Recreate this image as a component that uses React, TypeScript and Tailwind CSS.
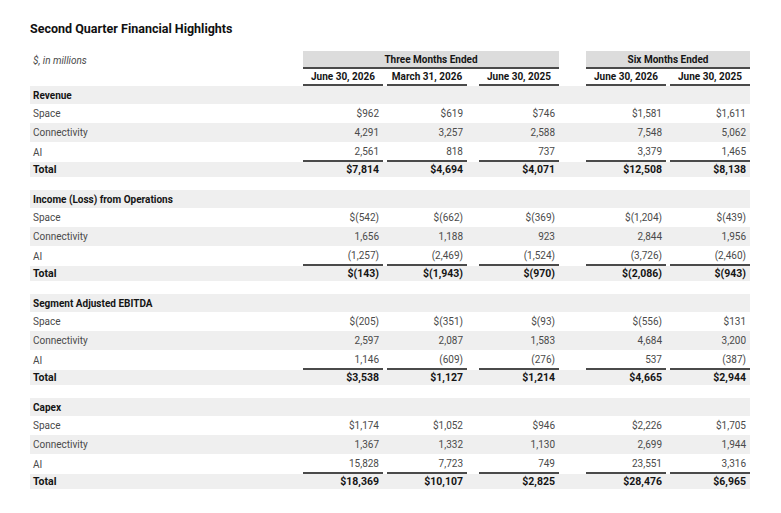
import React from "react";

type Sec = { title: string; rows: [string, string[]][]; total: string[] };

const sections: Sec[] = [
  {
    title: "Revenue",
    rows: [
      ["Space", ["$962", "$619", "$746", "$1,581", "$1,611"]],
      ["Connectivity", ["4,291", "3,257", "2,588", "7,548", "5,062"]],
      ["AI", ["2,561", "818", "737", "3,379", "1,465"]],
    ],
    total: ["$7,814", "$4,694", "$4,071", "$12,508", "$8,138"],
  },
  {
    title: "Income (Loss) from Operations",
    rows: [
      ["Space", ["$(542)", "$(662)", "$(369)", "$(1,204)", "$(439)"]],
      ["Connectivity", ["1,656", "1,188", "923", "2,844", "1,956"]],
      ["AI", ["(1,257)", "(2,469)", "(1,524)", "(3,726)", "(2,460)"]],
    ],
    total: ["$(143)", "$(1,943)", "$(970)", "$(2,086)", "$(943)"],
  },
  {
    title: "Segment Adjusted EBITDA",
    rows: [
      ["Space", ["$(205)", "$(351)", "$(93)", "$(556)", "$131"]],
      ["Connectivity", ["2,597", "2,087", "1,583", "4,684", "3,200"]],
      ["AI", ["1,146", "(609)", "(276)", "537", "(387)"]],
    ],
    total: ["$3,538", "$1,127", "$1,214", "$4,665", "$2,944"],
  },
  {
    title: "Capex",
    rows: [
      ["Space", ["$1,174", "$1,052", "$946", "$2,226", "$1,705"]],
      ["Connectivity", ["1,367", "1,332", "1,130", "2,699", "1,944"]],
      ["AI", ["15,828", "7,723", "749", "23,551", "3,316"]],
    ],
    total: ["$18,369", "$10,107", "$2,825", "$28,476", "$6,965"],
  },
];

const GRID =
  "grid grid-cols-[273px_80px_4px_80px_12px_80px_27px_80px_4px_80px]";

function NumCells({
  vals,
  bold,
  underline,
}: {
  vals: string[];
  bold?: boolean;
  underline?: boolean;
}) {
  const out: React.ReactNode[] = [];
  vals.forEach((v, i) => {
    if (i > 0) out.push(<div key={"s" + i} />);
    out.push(
      <div
        key={"v" + i}
        className={
          "flex items-center justify-end pr-[4px] " +
          (underline ? "border-b-2 border-[#4a4a4a] " : "") +
          (bold
            ? "font-bold text-[10.5px] text-[#151515]"
            : "text-[10px] text-[#4a4a4a]")
        }
      >
        {v}
      </div>
    );
  });
  return <>{out}</>;
}

function Section({ s }: { s: Sec }) {
  return (
    <div className="flex flex-col">
      <div className={GRID + " h-[18px] bg-[#efefef]"}>
        <div className="col-span-10 flex items-center pl-[3px] font-bold text-[10px] text-[#151515]">
          {s.title}
        </div>
      </div>
      {s.rows.map(([label, vals], idx) => {
        const last = idx === s.rows.length - 1;
        return (
          <div
            key={label}
            className={
              GRID +
              (last ? " h-[20px]" : " h-[19px]") +
              (idx === 1 ? " bg-[#efefef]" : " bg-white")
            }
          >
            <div className="flex items-center pl-[3px] text-[10px] text-[#4a4a4a]">
              {label}
            </div>
            <NumCells vals={vals} underline={last} />
          </div>
        );
      })}
      <div className={GRID + " h-[15px] bg-[#efefef]"}>
        <div className="flex items-center pl-[3px] font-bold text-[10.5px] text-[#151515]">
          Total
        </div>
        <NumCells vals={s.total} bold />
      </div>
    </div>
  );
}

export default function App() {
  const cols3 = ["June 30, 2026", "March 31, 2026", "June 30, 2025"];
  const cols6 = ["June 30, 2026", "June 30, 2025"];
  return (
    <div className="w-[781px] h-[513px] bg-white [font-family:Roboto,sans-serif] overflow-hidden">
      <div className="ml-[30px] w-[720px]">
        <div className="pt-[21px] h-[37px] text-[12.5px] leading-[16px] font-bold text-[#111]">
          Second Quarter Financial Highlights
        </div>
        <div className="h-[14px]" />
        {/* header bars */}
        <div className={GRID + " h-[18px]"}>
          <div className="flex items-center pl-[3px] italic text-[10px] text-[#4a4a4a]">
            $, in millions
          </div>
          <div className="col-span-5 flex items-center justify-center bg-[#dcdcdc] border-b-2 border-[#4a4a4a] font-bold text-[10px] text-[#151515]">
            Three Months Ended
          </div>
          <div />
          <div className="col-span-3 flex items-center justify-center bg-[#dcdcdc] border-b-2 border-[#4a4a4a] font-bold text-[10px] text-[#151515]">
            Six Months Ended
          </div>
        </div>
        <div className={GRID + " h-[17px]"}>
          <div />
          {cols3.map((c, i) => (
            <React.Fragment key={"a" + i}>
              {i > 0 && <div />}
              <div className="flex items-center justify-center border-b-2 border-[#4a4a4a] font-bold text-[10px] text-[#151515]">
                {c}
              </div>
            </React.Fragment>
          ))}
          <div />
          {cols6.map((c, i) => (
            <React.Fragment key={"b" + i}>
              {i > 0 && <div />}
              <div className="flex items-center justify-center border-b-2 border-[#4a4a4a] font-bold text-[10px] text-[#151515]">
                {c}
              </div>
            </React.Fragment>
          ))}
        </div>
        <div className="flex flex-col gap-[13px] pt-[0px]">
          {sections.map((s) => (
            <Section key={s.title} s={s} />
          ))}
        </div>
      </div>
    </div>
  );
}
